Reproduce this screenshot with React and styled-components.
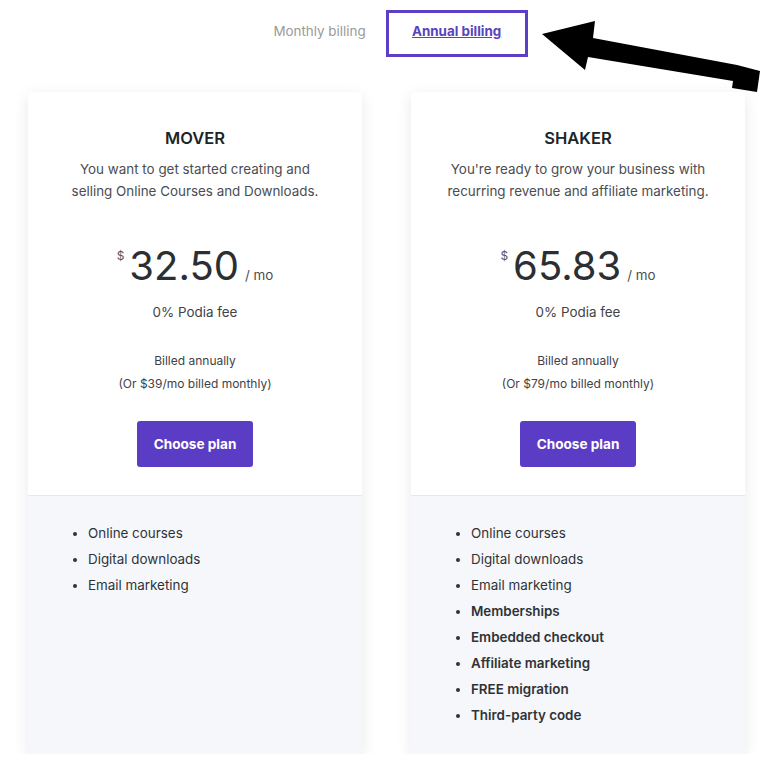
import React from "react";
import styled, { createGlobalStyle } from "styled-components";

const GlobalStyle = createGlobalStyle`
  html, body {
    margin: 0;
    padding: 0;
    background: #ffffff;
    font-family: Inter, "Noto Sans", sans-serif;
    color: #2a2e33;
  }
`;

const plans = [
  {
    name: "MOVER",
    description: ["You want to get started creating and", "selling Online Courses and Downloads."],
    price: "32.50",
    monthly: "$39",
    features: [
      { label: "Online courses" },
      { label: "Digital downloads" },
      { label: "Email marketing" },
    ],
  },
  {
    name: "SHAKER",
    description: ["You're ready to grow your business with", "recurring revenue and affiliate marketing."],
    price: "65.83",
    monthly: "$79",
    features: [
      { label: "Online courses" },
      { label: "Digital downloads" },
      { label: "Email marketing" },
      { label: "Memberships", strong: true },
      { label: "Embedded checkout", strong: true },
      { label: "Affiliate marketing", strong: true },
      { label: "FREE migration", strong: true },
      { label: "Third-party code", strong: true },
    ],
  },
];

const Page = styled.div`
  position: relative;
  padding-top: 10px;
`;

const Toggle = styled.div`
  display: flex;
  align-items: center;
  justify-content: center;
  gap: 20px;
  padding-left: 25px;
`;

const ToggleOption = styled.a`
  font-size: 13.4px;
  line-height: 18px;
  padding-bottom: 5px;
  color: ${(p) => (p.active ? "#5a43bd" : "#9a9a9a")};
  font-weight: ${(p) => (p.active ? 700 : 400)};
  text-decoration: ${(p) => (p.active ? "underline" : "none")};
  cursor: pointer;
`;

const ActiveBox = styled.div`
  box-sizing: border-box;
  width: 142px;
  height: 47px;
  border: 3px solid #5b3fc6;
  display: flex;
  align-items: center;
  justify-content: center;
`;

const Arrow = styled.svg`
  position: absolute;
  left: 530px;
  top: 10px;
`;

const Cards = styled.div`
  display: grid;
  grid-template-columns: 334px 334px;
  gap: 49px;
  justify-content: center;
  margin-top: 35px;
  padding-right: 3px;
`;

const Card = styled.section`
  display: flex;
  flex-direction: column;
  border-radius: 4px;
  background: #f5f7fa;
  box-shadow: 0 4px 16px rgba(0, 0, 0, 0.09);
  overflow: hidden;
`;

const CardTop = styled.div`
  background: #ffffff;
  border-bottom: 1px solid #e6e8ec;
  padding: 34px 16px 28px;
  display: flex;
  flex-direction: column;
  align-items: center;
  text-align: center;
`;

const PlanName = styled.h2`
  margin: 0;
  font-size: 16.5px;
  line-height: 24px;
  font-weight: 600;
  color: #202428;
`;

const Description = styled.p`
  margin: 8px 0 0;
  font-size: 13.4px;
  line-height: 22px;
  color: #4a4d52;
`;

const PriceRow = styled.div`
  margin-top: 38px;
  display: flex;
  align-items: baseline;
  height: 52px;
  color: #2b2f34;
`;

const Currency = styled.span`
  font-size: 12px;
  align-self: flex-start;
  margin-top: 8px;
  margin-right: 5px;
  color: #55585d;
`;

const Amount = styled.span`
  font-size: 40px;
  line-height: 52px;
  font-weight: 400;
`;

const Per = styled.span`
  font-size: 13.4px;
  margin-left: 6px;
  color: #4a4d52;
`;

const Fee = styled.div`
  margin-top: 9px;
  font-size: 13.4px;
  line-height: 22px;
  color: #3f4247;
`;

const Billing = styled.div`
  margin-top: 26px;
  font-size: 12px;
  line-height: 23px;
  color: #3f4247;
`;

const ChooseButton = styled.button`
  margin-top: 26px;
  width: 116px;
  height: 46px;
  border: none;
  border-radius: 3px;
  background: #5b3cc4;
  color: #ffffff;
  font-family: inherit;
  font-size: 13.6px;
  font-weight: 700;
  cursor: pointer;
`;

const Features = styled.ul`
  margin: 0;
  padding: 24px 0 26px 60px;
  flex: 1;
`;

const Feature = styled.li`
  font-size: 13.4px;
  line-height: 26px;
  color: #2f3338;
  font-weight: ${(p) => (p.strong ? 600 : 400)};
`;

const App = () => {
  return (
    <Page>
      <GlobalStyle />
      <Toggle>
        <ToggleOption>Monthly billing</ToggleOption>
        <ActiveBox>
          <ToggleOption active>Annual billing</ToggleOption>
        </ActiveBox>
      </Toggle>
      <Arrow width="240" height="90" viewBox="0 0 240 90">
        <polygon
          fill="#000"
          points="12,24 65,11 63,28 207,55 230,61 227,82 202,78 203,71 58,47 55,60"
        />
      </Arrow>
      <Cards>
        {plans.map((plan) => (
          <Card key={plan.name}>
            <CardTop>
              <PlanName>{plan.name}</PlanName>
              <Description>
                {plan.description[0]}
                <br />
                {plan.description[1]}
              </Description>
              <PriceRow>
                <Currency>$</Currency>
                <Amount>{plan.price}</Amount>
                <Per>/ mo</Per>
              </PriceRow>
              <Fee>0% Podia fee</Fee>
              <Billing>
                Billed annually
                <br />
                (Or {plan.monthly}/mo billed monthly)
              </Billing>
              <ChooseButton>Choose plan</ChooseButton>
            </CardTop>
            <Features>
              {plan.features.map((f) => (
                <Feature key={f.label} strong={f.strong}>
                  {f.label}
                </Feature>
              ))}
            </Features>
          </Card>
        ))}
      </Cards>
    </Page>
  );
};

export default App;
